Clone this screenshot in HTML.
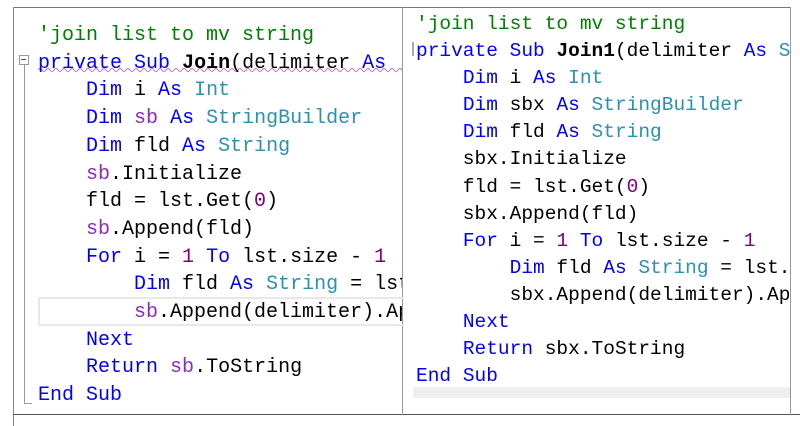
<!DOCTYPE html><html><head><style>
body{margin:0;width:800px;height:426px;background:#fff;position:relative;overflow:hidden;font-family:"Liberation Mono",monospace}
.p{position:absolute;white-space:pre;overflow:hidden}
.k{color:#0000ff}.t{color:#2b91af}.c{color:#008000}.v{color:#8b2bbd}.n{color:#800080}.b{font-weight:bold}
</style></head><body>
<div style="position:absolute;left:13px;top:7px;width:777px;height:1px;background:#777"></div>
<div style="position:absolute;left:13px;top:7px;width:1px;height:419px;background:#888"></div>
<div style="position:absolute;left:13px;top:414px;width:787px;height:1px;background:#555"></div>
<div style="position:absolute;left:402px;top:7px;width:1px;height:408px;background:#999"></div>
<div style="position:absolute;left:790px;top:7px;width:1px;height:408px;background:#999"></div>
<div style="position:absolute;left:38px;top:297px;width:364px;height:25px;border:2px solid #e8e8e8;border-right:none"></div>
<div style="position:absolute;left:413px;top:387px;width:377px;height:11px;background:#efefef"></div>
<div style="position:absolute;left:19px;top:55px;width:8px;height:8px;border:1px solid #999;background:#fff"></div>
<div style="position:absolute;left:21px;top:59px;width:5px;height:1px;background:#555"></div>
<div style="position:absolute;left:24px;top:65px;width:1px;height:338px;background:#999"></div>
<div style="position:absolute;left:24px;top:403px;width:8px;height:1px;background:#999"></div>
<svg style="position:absolute;left:38px;top:67px" width="364" height="6"><path d="M0 3 q2 -3 4 0 t4 0 t4 0 t4 0 t4 0 t4 0 t4 0 t4 0 t4 0 t4 0 t4 0 t4 0 t4 0 t4 0 t4 0 t4 0 t4 0 t4 0 t4 0 t4 0 t4 0 t4 0 t4 0 t4 0 t4 0 t4 0 t4 0 t4 0 t4 0 t4 0 t4 0 t4 0 t4 0 t4 0 t4 0 t4 0 t4 0 t4 0 t4 0 t4 0 t4 0 t4 0 t4 0 t4 0 t4 0 t4 0 t4 0 t4 0 t4 0 t4 0 t4 0 t4 0 t4 0 t4 0 t4 0 t4 0 t4 0 t4 0 t4 0 t4 0 t4 0 t4 0 t4 0 t4 0 t4 0 t4 0 t4 0 t4 0 t4 0 t4 0 t4 0 t4 0 t4 0 t4 0 t4 0 t4 0 t4 0 t4 0 t4 0 t4 0 t4 0 t4 0 t4 0 t4 0 t4 0 t4 0 t4 0 t4 0 t4 0 t4 0 t4 0 t4 0 t4 0 t4 0 t4 0" fill="none" stroke="#c070c0" stroke-width="1"/></svg>
<div class="p" style="left:38px;top:22px;width:364px;height:392px;font-size:20px;line-height:27.7px"><span class="c">'join list to mv string</span>
<span class="k">private</span> <span class="k">Sub</span> <span class="b">Join</span>(delimiter <span class="k">As</span> 
    <span class="k">Dim</span> i <span class="k">As</span> <span class="t">Int</span>
    <span class="k">Dim</span> <span class="v">sb</span> <span class="k">As</span> <span class="t">StringBuilder</span>
    <span class="k">Dim</span> fld <span class="k">As</span> <span class="t">String</span>
    <span class="v">sb</span>.Initialize
    fld = lst.Get(<span class="n">0</span>)
    <span class="v">sb</span>.Append(fld)
    <span class="k">For</span> i = <span class="n">1</span> <span class="k">To</span> lst.size - <span class="n">1</span>
        <span class="k">Dim</span> fld <span class="k">As</span> <span class="t">String</span> = lst.Get(i)
        <span class="v">sb</span>.Append(delimiter).Append(fld)
    <span class="k">Next</span>
    <span class="k">Return</span> <span class="v">sb</span>.ToString
<span class="k">End</span> <span class="k">Sub</span></div>
<div style="position:absolute;left:412px;top:42px;width:2px;height:14px;background:#aaa"></div>
<div class="p" style="left:416px;top:11px;width:374px;height:376px;font-size:19.5px;line-height:27.1px"><span class="c">'join list to mv string</span>
<span class="k">private</span> <span class="k">Sub</span> <span class="b">Join1</span>(delimiter <span class="k">As</span> <span class="t">String</span>
    <span class="k">Dim</span> i <span class="k">As</span> <span class="t">Int</span>
    <span class="k">Dim</span> sbx <span class="k">As</span> <span class="t">StringBuilder</span>
    <span class="k">Dim</span> fld <span class="k">As</span> <span class="t">String</span>
    sbx.Initialize
    fld = lst.Get(<span class="n">0</span>)
    sbx.Append(fld)
    <span class="k">For</span> i = <span class="n">1</span> <span class="k">To</span> lst.size - <span class="n">1</span>
        <span class="k">Dim</span> fld <span class="k">As</span> <span class="t">String</span> = lst.Get(i)
        sbx.Append(delimiter).Append(fld)
    <span class="k">Next</span>
    <span class="k">Return</span> sbx.ToString
<span class="k">End</span> <span class="k">Sub</span></div>
</body></html>
